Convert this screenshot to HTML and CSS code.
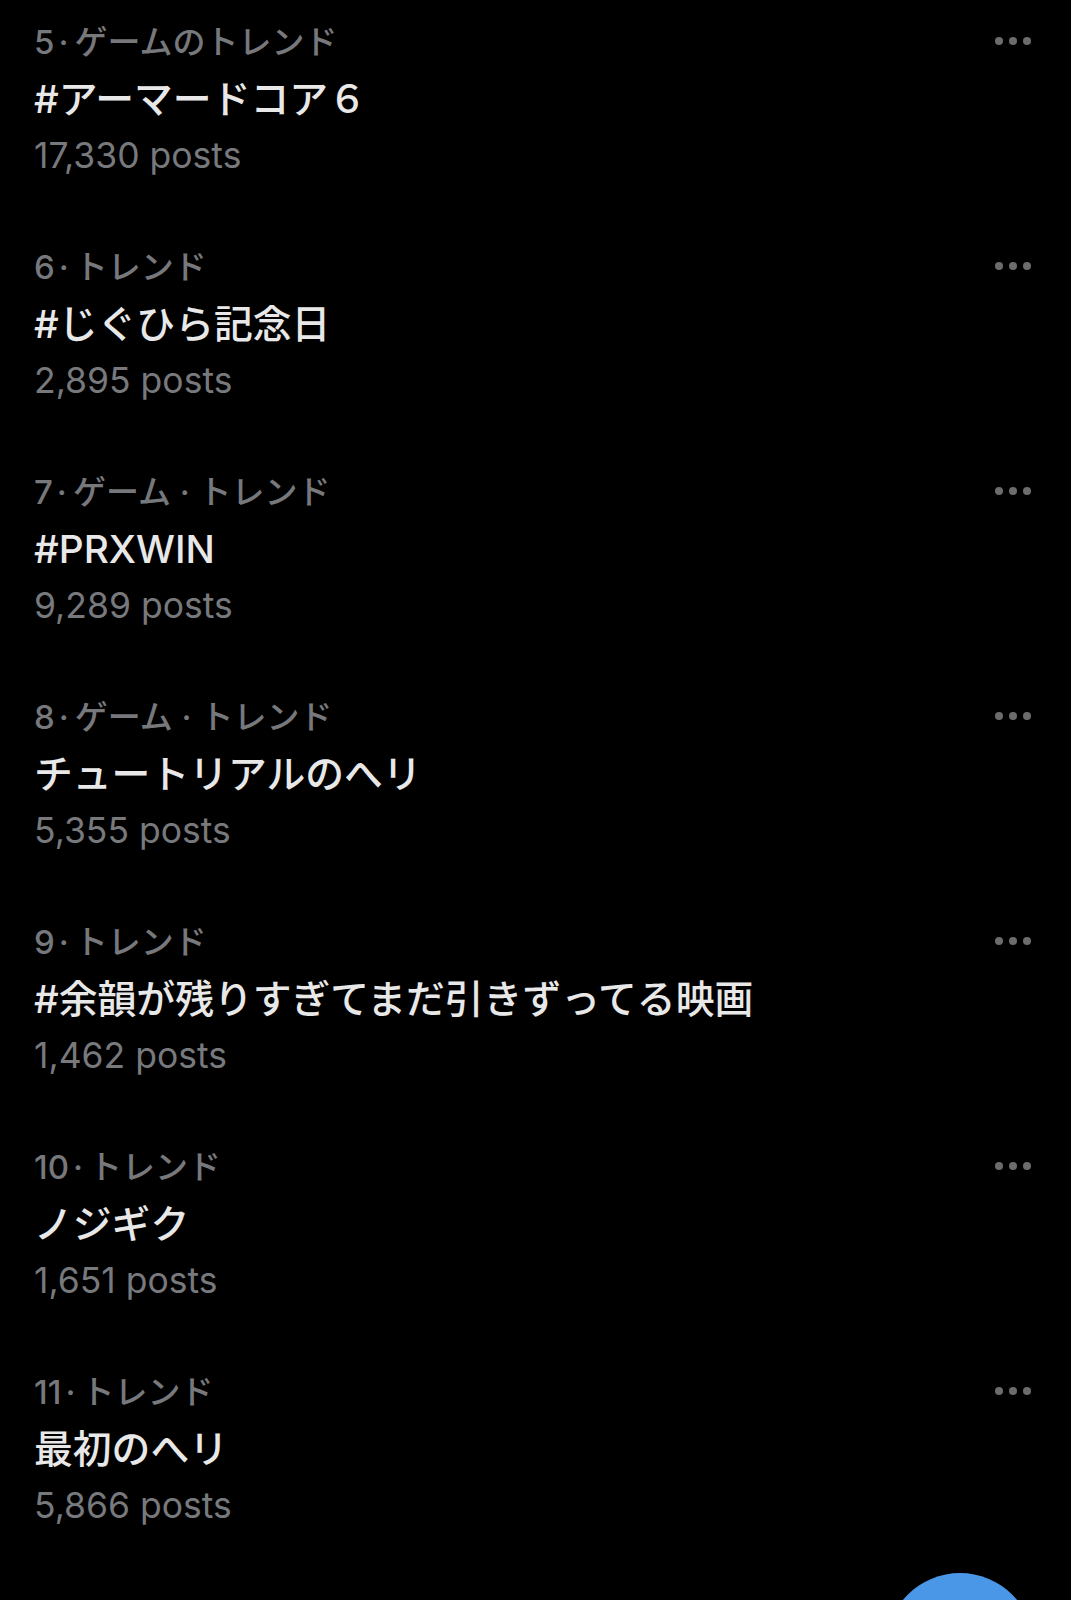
FILE: index.html
```html
<!DOCTYPE html>
<html lang="ja">
<head>
<meta charset="utf-8">
<title>トレンド</title>
<link rel="stylesheet" href="styles.css">
</head>
<body>
<main class="list">
  <section class="trend">
    <div class="info">
      <div class="cat">5<span class="dot">·</span>ゲームのトレンド</div>
      <div class="title">#アーマードコア６</div>
      <div class="posts">17,330 posts</div>
    </div>
    <div class="more"><span></span><span></span><span></span></div>
  </section>
  <section class="trend">
    <div class="info">
      <div class="cat">6<span class="dot">·</span>トレンド</div>
      <div class="title">#じぐひら記念日</div>
      <div class="posts">2,895 posts</div>
    </div>
    <div class="more"><span></span><span></span><span></span></div>
  </section>
  <section class="trend">
    <div class="info">
      <div class="cat">7<span class="dot">·</span>ゲーム · トレンド</div>
      <div class="title">#PRXWIN</div>
      <div class="posts">9,289 posts</div>
    </div>
    <div class="more"><span></span><span></span><span></span></div>
  </section>
  <section class="trend">
    <div class="info">
      <div class="cat">8<span class="dot">·</span>ゲーム · トレンド</div>
      <div class="title">チュートリアルのへリ</div>
      <div class="posts">5,355 posts</div>
    </div>
    <div class="more"><span></span><span></span><span></span></div>
  </section>
  <section class="trend">
    <div class="info">
      <div class="cat">9<span class="dot">·</span>トレンド</div>
      <div class="title">#余韻が残りすぎてまだ引きずってる映画</div>
      <div class="posts">1,462 posts</div>
    </div>
    <div class="more"><span></span><span></span><span></span></div>
  </section>
  <section class="trend">
    <div class="info">
      <div class="cat">10<span class="dot">·</span>トレンド</div>
      <div class="title">ノジギク</div>
      <div class="posts">1,651 posts</div>
    </div>
    <div class="more"><span></span><span></span><span></span></div>
  </section>
  <section class="trend">
    <div class="info">
      <div class="cat">11<span class="dot">·</span>トレンド</div>
      <div class="title">最初のへリ</div>
      <div class="posts">5,866 posts</div>
    </div>
    <div class="more"><span></span><span></span><span></span></div>
  </section>
</main>
<div class="fab"></div>
</body>
</html>
```

FILE: styles.css
```css
html, body {
  margin: 0;
  padding: 0;
  background: #000;
}
body {
  font-family: Inter, "Noto Sans CJK JP", sans-serif;
  overflow: hidden;
  height: 1600px;
  position: relative;
}
.list {
  padding-top: 20px;
}
.trend {
  display: flex;
  justify-content: space-between;
  align-items: flex-start;
  height: 225px;
  padding: 0 40px 0 34px;
  box-sizing: border-box;
}
.info {
  display: flex;
  flex-direction: column;
}
.cat {
  font-size: 33px;
  line-height: 44px;
  font-weight: 500;
  color: #76787b;
  white-space: pre;
}
.dot {
  padding: 0 6px 0 4px;
}
.title {
  font-size: 38.8px;
  line-height: 62px;
  margin-top: 4px;
  font-weight: 500;
  color: #e8e8e8;
  white-space: nowrap;
}
.posts {
  font-size: 35.5px;
  line-height: 52px;
  color: #77797c;
}
.more {
  display: flex;
  gap: 6px;
  margin-top: 17px;
}
.more span {
  width: 8px;
  height: 8px;
  border-radius: 50%;
  background: #6c6c6c;
}
.fab {
  position: absolute;
  left: 886px;
  top: 1573px;
  width: 148px;
  height: 148px;
  border-radius: 50%;
  background: #4a97e8;
}
```
